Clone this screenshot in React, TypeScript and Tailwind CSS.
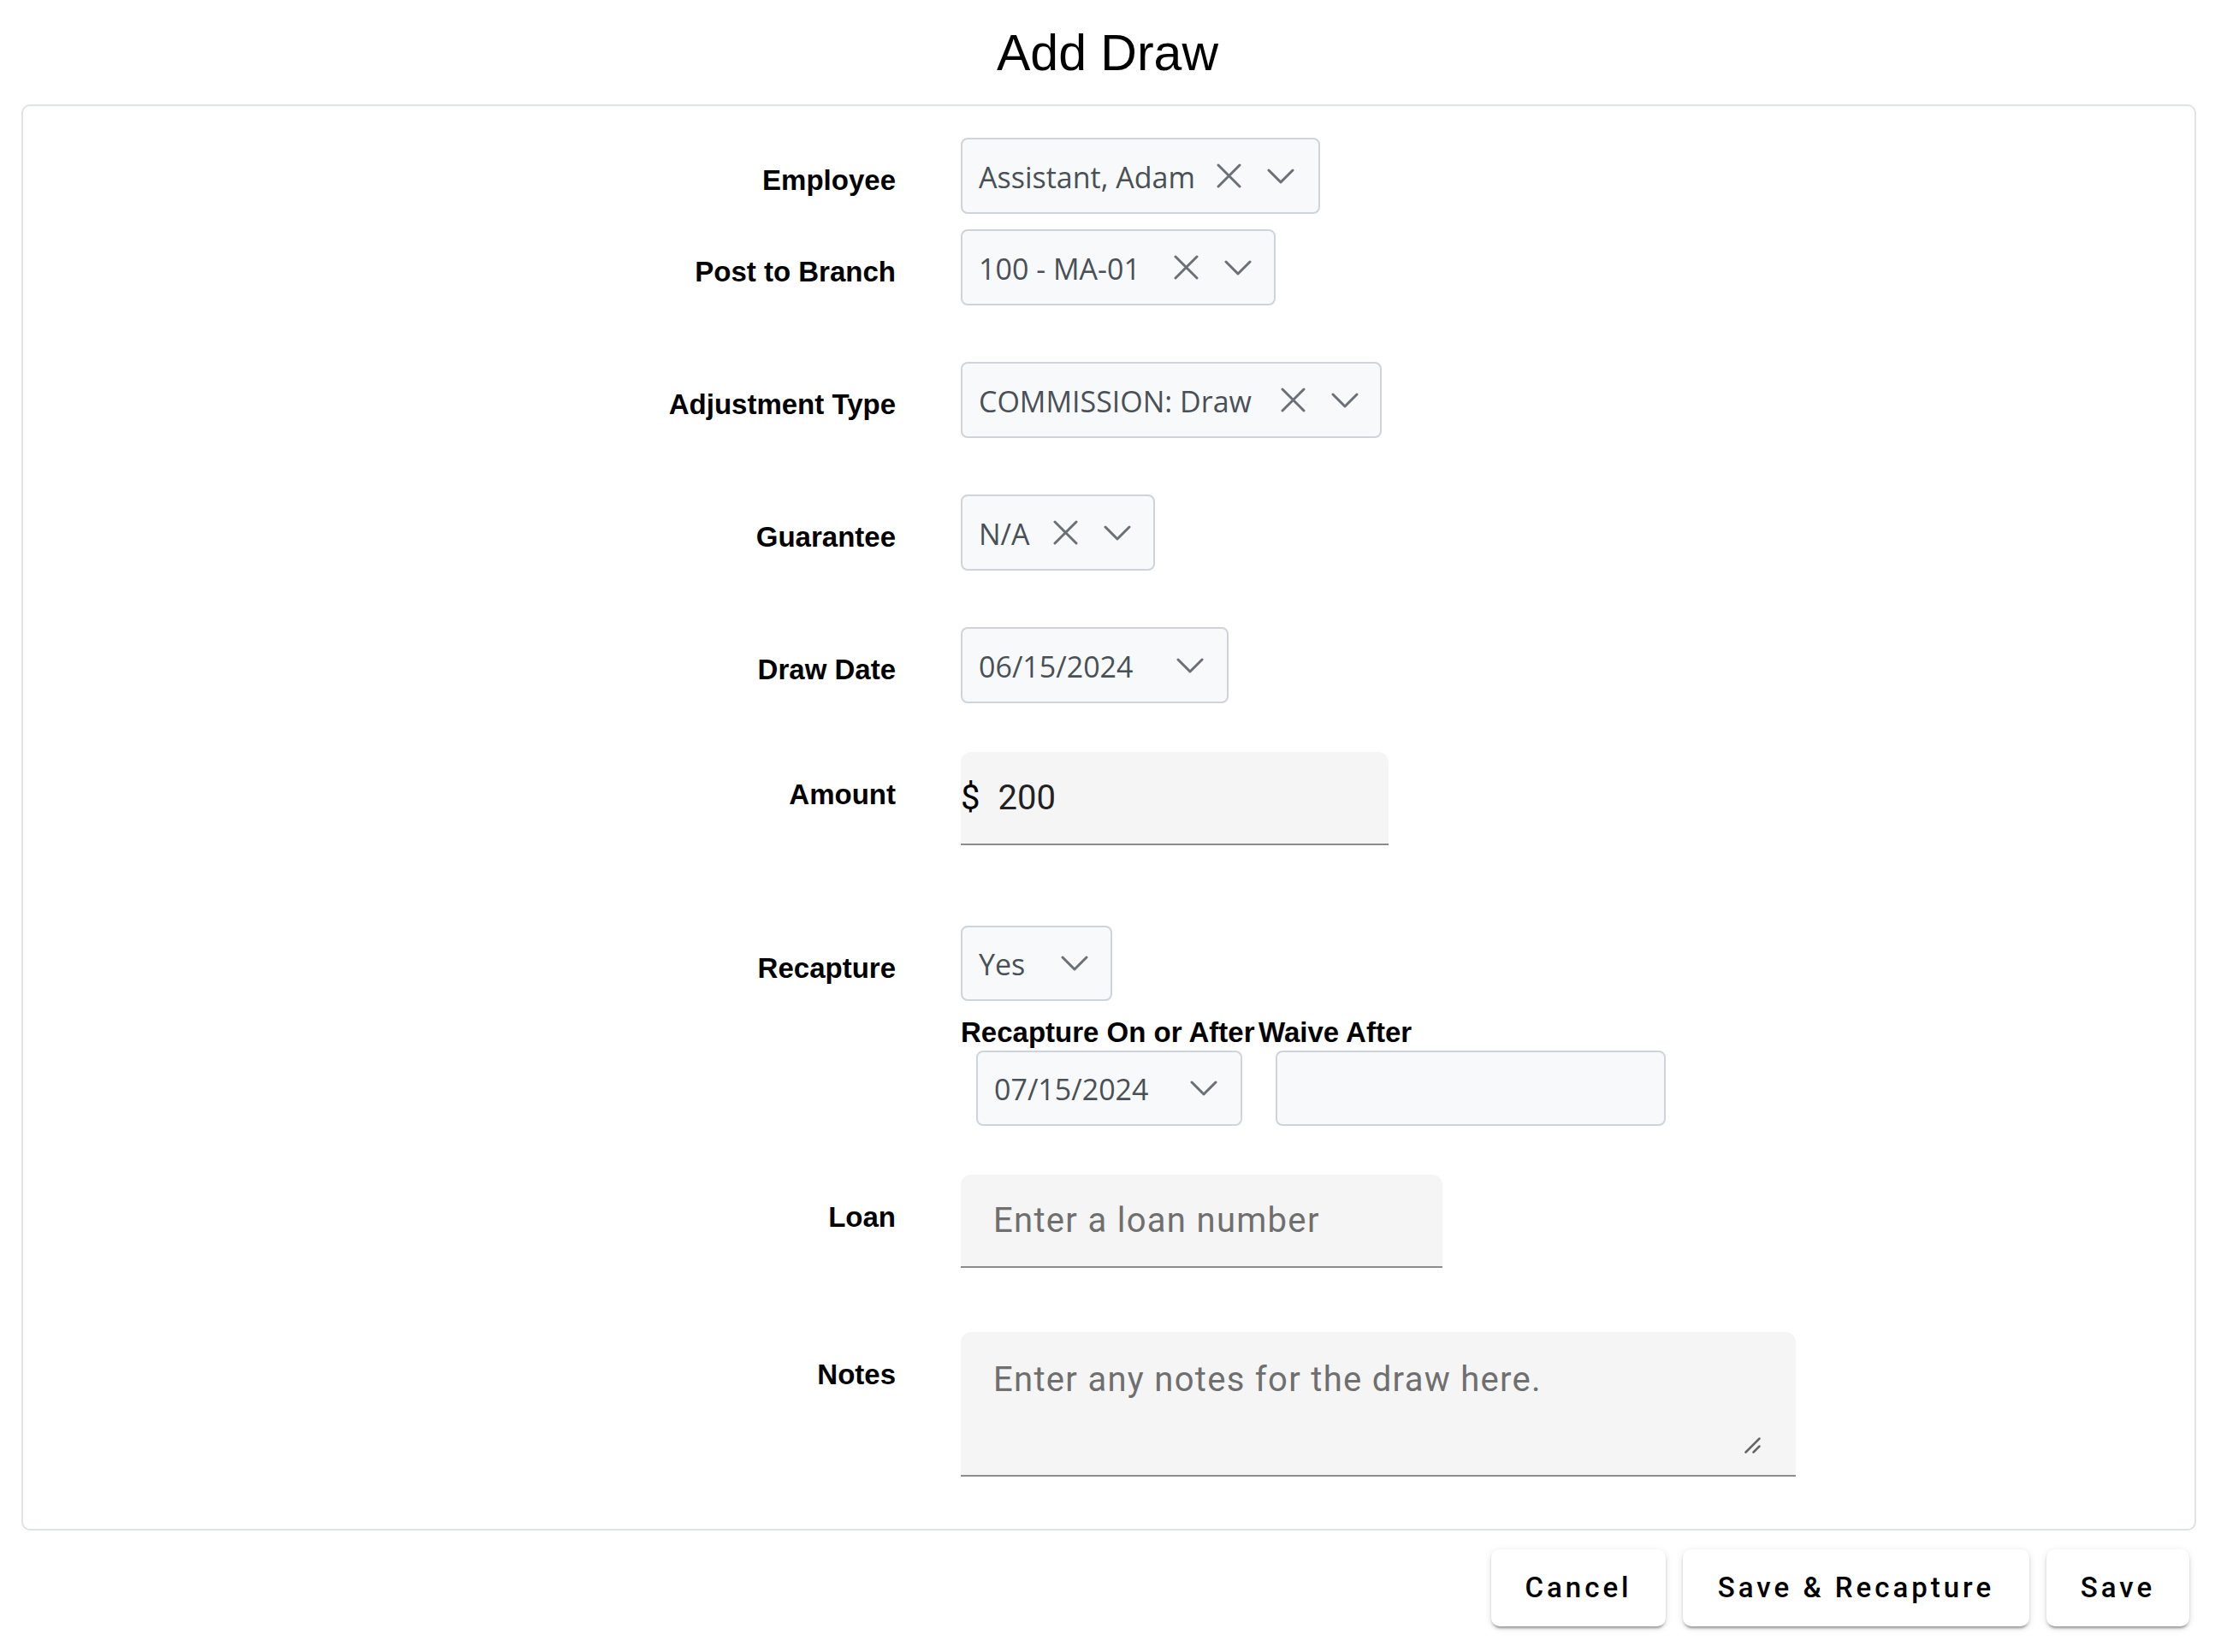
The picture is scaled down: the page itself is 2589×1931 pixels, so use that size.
import React from "react";

// Gray "x" used to clear a select
function ClearIcon() {
  return (
    <svg width="29" height="29" viewBox="0 0 29 29" fill="none" stroke="currentColor" strokeWidth="3" strokeLinecap="round">
      <path d="M2 2L27 27M27 2L2 27" />
    </svg>
  );
}

function ChevronIcon() {
  return (
    <svg width="32" height="18" viewBox="0 0 32 18" fill="none" stroke="currentColor" strokeWidth="3" strokeLinecap="round" strokeLinejoin="round">
      <path d="M2 2L16 16L30 2" />
    </svg>
  );
}

function SelectBox({ value, className = "", clearable = true }: { value: string; className?: string; clearable?: boolean }) {
  return (
    <div
      className={`flex items-center justify-between rounded-[8px] border-2 border-[#ced4da] bg-[#f8f9fa] pl-[19px] font-['Open_Sans',sans-serif] text-[34px] text-[#495057] ${className}`}
    >
      <span className="whitespace-nowrap pt-[3px]">{value}</span>
      <div className="flex items-center gap-[30px] text-[#6b7076]">
        {clearable && <ClearIcon />}
        <ChevronIcon />
      </div>
    </div>
  );
}

function FormRow({ label, className = "", children }: { label: string; className?: string; children: React.ReactNode }) {
  return (
    <div className={`flex items-start gap-[76px] ${className}`}>
      <div className="w-[1020px] shrink-0 pt-[33px] text-right text-[33px] font-bold leading-[33px] text-black">{label}</div>
      <div>{children}</div>
    </div>
  );
}

export default function App() {
  return (
    <div className="min-h-screen bg-white font-['Liberation_Sans',Arial,sans-serif]">
      <h1 className="pt-[33px] text-center text-[59px] font-normal leading-[59px] text-black">Add Draw</h1>

      <div className="ml-[25px] mr-[22px] mt-[30px] rounded-[10px] border-2 border-[#dfe2e6] pb-[61px] pt-[37px]">
        <FormRow label="Employee">
          <SelectBox value="Assistant, Adam" className="h-[89px] w-[420px] pr-[28px]" />
        </FormRow>

        <FormRow label="Post to Branch" className="mt-[18px]">
          <SelectBox value="100 - MA-01" className="h-[89px] w-[368px] pr-[26px]" />
        </FormRow>

        <FormRow label="Adjustment Type" className="mt-[66px]">
          <SelectBox value="COMMISSION: Draw" className="h-[89px] w-[492px] pr-[25px]" />
        </FormRow>

        <FormRow label="Guarantee" className="mt-[66px]">
          <SelectBox value="N/A" className="h-[89px] w-[227px] pr-[26px]" />
        </FormRow>

        <FormRow label="Draw Date" className="mt-[66px]">
          <SelectBox value="06/15/2024" clearable={false} className="h-[89px] w-[313px] pr-[27px]" />
        </FormRow>

        <FormRow label="Amount" className="mt-[57px]">
          <div className="flex h-[109px] w-[500px] items-center rounded-t-[12px] border-b-2 border-[#8c8c8c] bg-[#f5f5f5] font-['Roboto',sans-serif] text-[40px]">
            <span className="text-black">$</span>
            <span className="ml-[21px] text-[#222222]">200</span>
          </div>
        </FormRow>

        <FormRow label="Recapture" className="mt-[94px]">
          <SelectBox value="Yes" clearable={false} className="h-[88px] w-[177px] pr-[26px]" />
          <div className="mt-[20px] flex">
            <div className="w-[348px]">
              <div className="whitespace-nowrap text-[33px] font-bold leading-[33px] text-black">Recapture On or After</div>
              <SelectBox value="07/15/2024" clearable={false} className="ml-[18px] mt-[5px] h-[88px] w-[311px] pr-[27px]" />
            </div>
            <div>
              <div className="whitespace-nowrap text-[33px] font-bold leading-[33px] text-black">Waive After</div>
              <div className="ml-[20px] mt-[5px] h-[88px] w-[456px] rounded-[8px] border-2 border-[#ced4da] bg-[#f8f9fa]" />
            </div>
          </div>
        </FormRow>

        <FormRow label="Loan" className="mt-[57px]">
          <input
            placeholder="Enter a loan number"
            className="block h-[109px] w-[563px] rounded-t-[12px] border-b-2 border-[#8c8c8c] bg-[#f5f5f5] pl-[38px] font-['Roboto',sans-serif] text-[40px] tracking-[1.3px] text-[#222222] outline-none placeholder:text-[#6f6f6f] placeholder:opacity-100"
          />
        </FormRow>

        <FormRow label="Notes" className="mt-[75px]">
          <div className="relative h-[169px] w-[976px] rounded-t-[12px] border-b-2 border-[#8c8c8c] bg-[#f5f5f5]">
            <textarea
              placeholder="Enter any notes for the draw here."
              className="block h-full w-full resize-none bg-transparent pl-[38px] pr-[60px] pt-[27px] font-['Roboto',sans-serif] text-[40px] leading-[57px] tracking-[1.3px] text-[#222222] outline-none placeholder:text-[#6f6f6f] placeholder:opacity-100"
            />
            {/* resize grip */}
            <svg className="absolute bottom-[25px] right-[41px]" width="19" height="19" viewBox="0 0 19 19" fill="none" stroke="#666666" strokeWidth="2.5" strokeLinecap="round">
              <path d="M1.5 17.5L17.5 1.5M10.5 17.5L17.5 10.5" />
            </svg>
          </div>
        </FormRow>
      </div>

      <div className="mr-[30px] mt-[22px] flex justify-end gap-[20px] font-['Roboto',sans-serif] text-[33px] font-medium tracking-[4px] text-black">
        <button className="h-[90px] w-[204px] rounded-[10px] bg-white shadow-[0_5px_2px_-3px_rgba(0,0,0,0.2),0_3px_3px_0_rgba(0,0,0,0.14),0_2px_8px_0_rgba(0,0,0,0.12)]">
          Cancel
        </button>
        <button className="h-[90px] w-[405px] rounded-[10px] bg-white shadow-[0_5px_2px_-3px_rgba(0,0,0,0.2),0_3px_3px_0_rgba(0,0,0,0.14),0_2px_8px_0_rgba(0,0,0,0.12)]">
          Save &amp; Recapture
        </button>
        <button className="h-[90px] w-[167px] rounded-[10px] bg-white shadow-[0_5px_2px_-3px_rgba(0,0,0,0.2),0_3px_3px_0_rgba(0,0,0,0.14),0_2px_8px_0_rgba(0,0,0,0.12)]">
          Save
        </button>
      </div>
    </div>
  );
}
